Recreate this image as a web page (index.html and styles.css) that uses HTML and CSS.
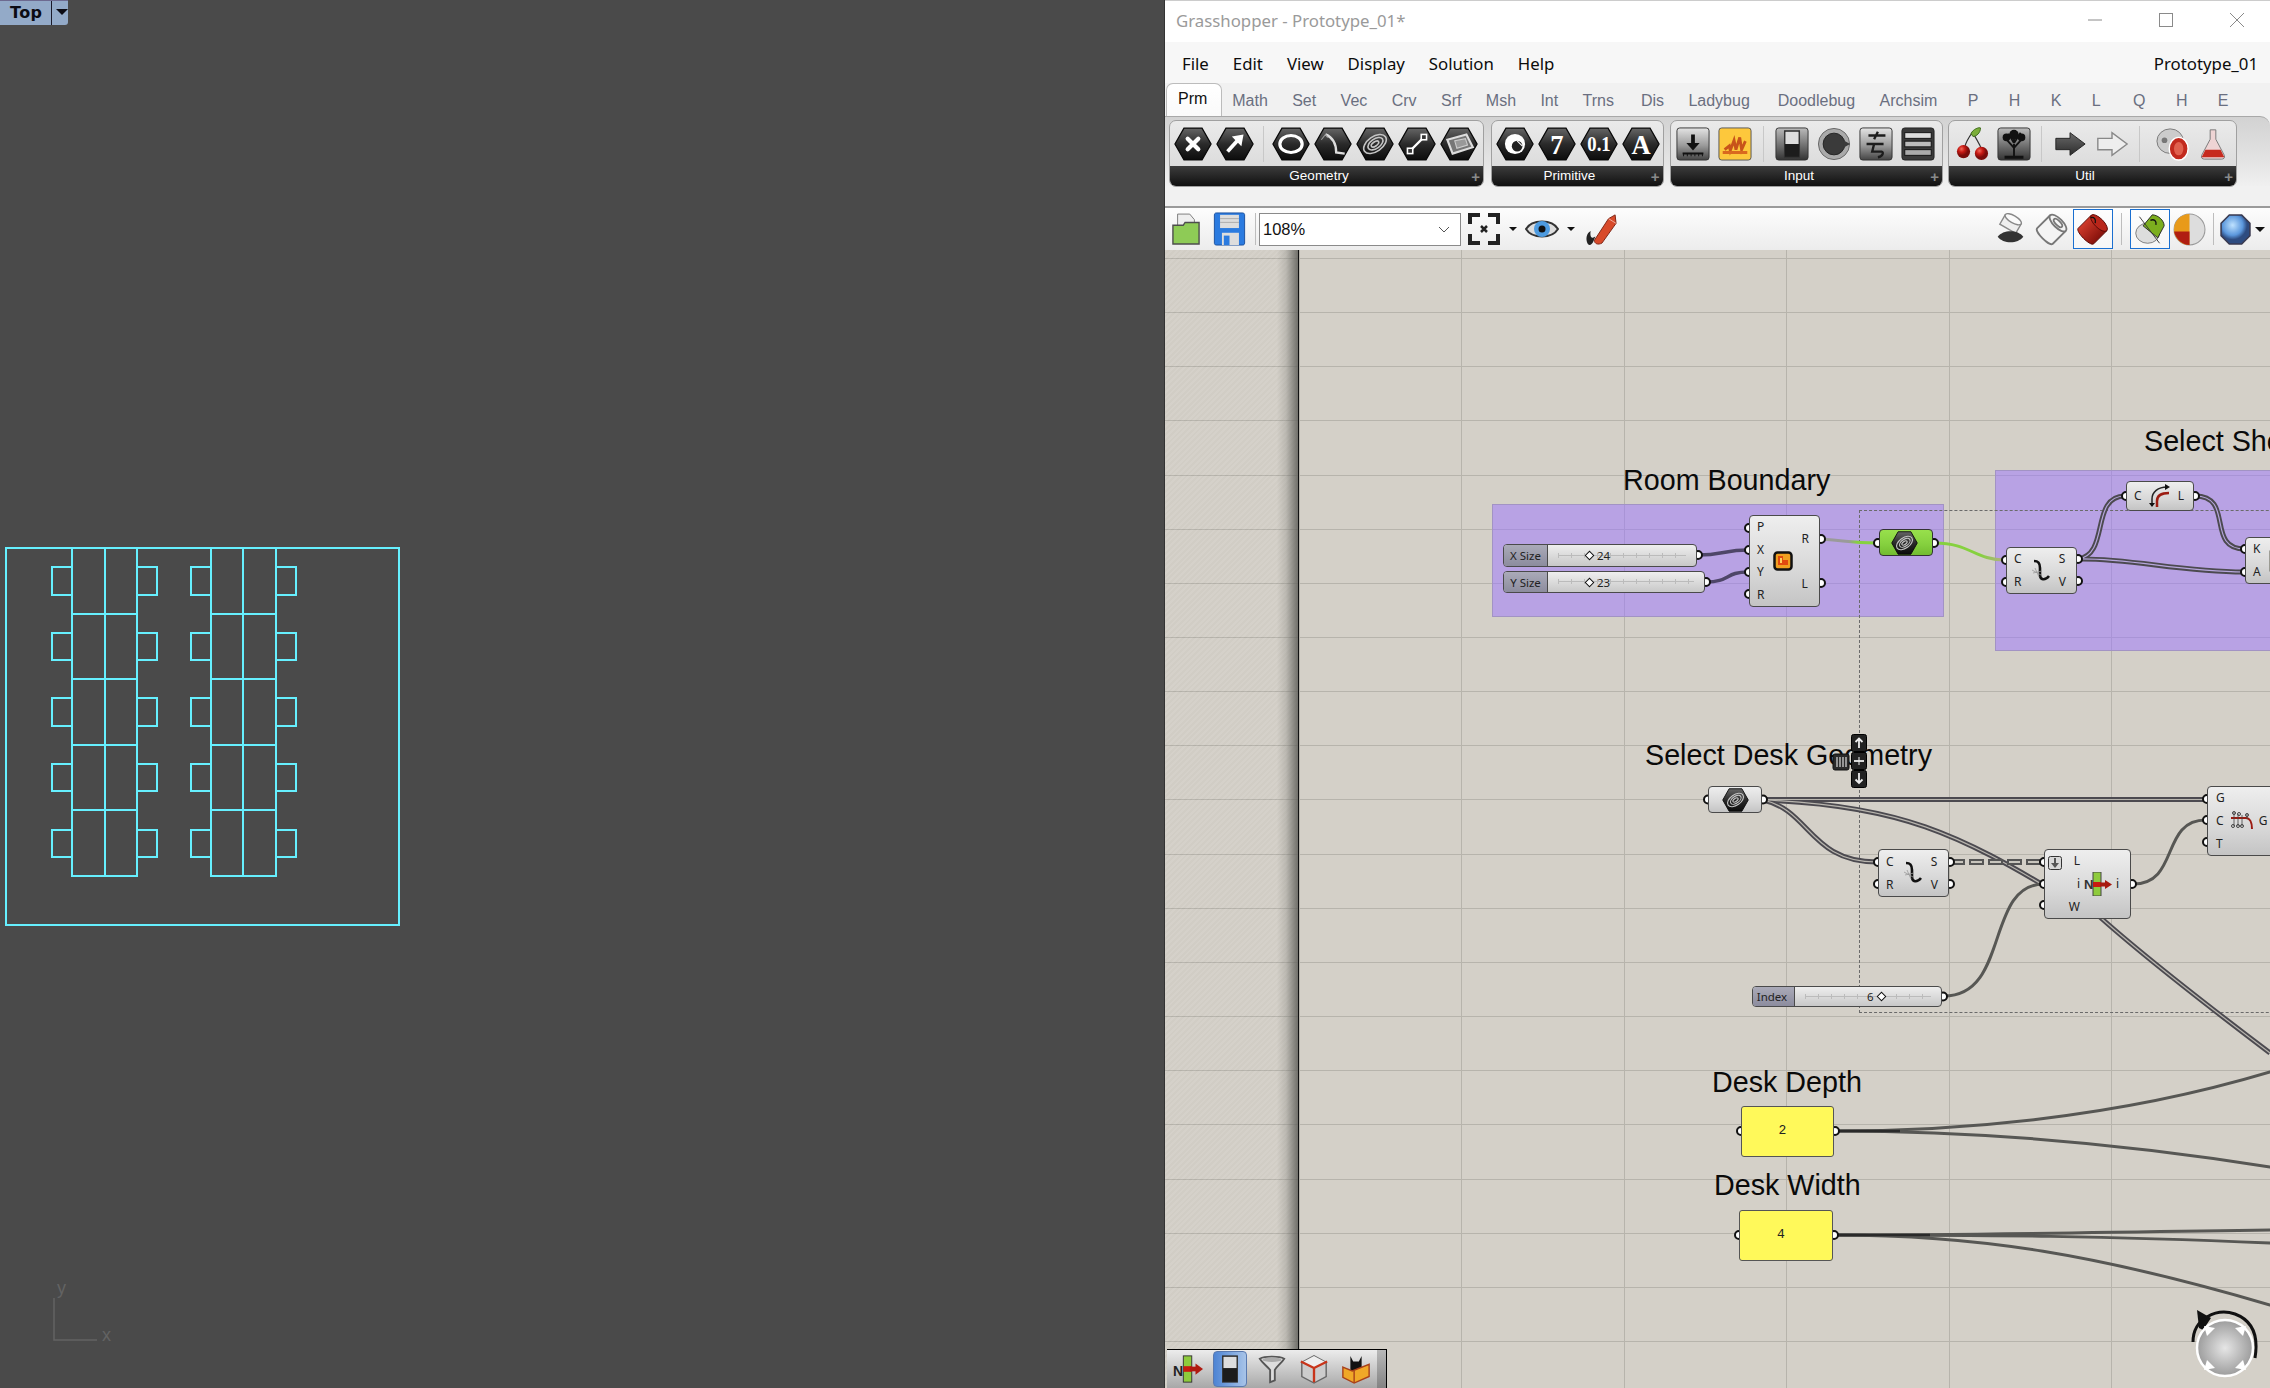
FILE: index.html
```html
<!DOCTYPE html>
<html lang="en">
<head>
<meta charset="utf-8">
<title>Grasshopper - Prototype_01*</title>
<link rel="stylesheet" href="styles.css">
</head>
<body>
<svg class="defs" width="0" height="0" aria-hidden="true">
  <defs>
    <linearGradient id="hexfill" x1="0" y1="0" x2="0" y2="1"><stop offset="0" stop-color="#666"/><stop offset=".5" stop-color="#2a2a2a"/><stop offset="1" stop-color="#0c0c0c"/></linearGradient>
    <linearGradient id="btnfill" x1="0" y1="0" x2="0" y2="1"><stop offset="0" stop-color="#e4e4e4"/><stop offset=".55" stop-color="#9a9a9a"/><stop offset="1" stop-color="#444"/></linearGradient>
    <linearGradient id="darkbtn" x1="0" y1="0" x2="0" y2="1"><stop offset="0" stop-color="#bbb"/><stop offset="1" stop-color="#333"/></linearGradient>
    <linearGradient id="arrowfill" x1="0" y1="0" x2="0" y2="1"><stop offset="0" stop-color="#6a6a6a"/><stop offset="1" stop-color="#2c2c2c"/></linearGradient>
    <linearGradient id="redcyl" x1="0" y1="0" x2="1" y2="0"><stop offset="0" stop-color="#d03a2a"/><stop offset="1" stop-color="#86120c"/></linearGradient>
    <linearGradient id="toGreen" gradientUnits="userSpaceOnUse" x1="1821" y1="0" x2="1876" y2="0"><stop offset="0" stop-color="#9a9a9a"/><stop offset=".5" stop-color="#9a9a9a"/><stop offset=".65" stop-color="#86d13f"/></linearGradient>
    <linearGradient id="fromGreen" gradientUnits="userSpaceOnUse" x1="1935" y1="0" x2="2005" y2="0"><stop offset="0" stop-color="#86d13f"/><stop offset=".65" stop-color="#86d13f"/><stop offset="1" stop-color="#b5ab8c"/></linearGradient>
    <radialGradient id="dialfill"><stop offset="0" stop-color="#e6e6e6"/><stop offset="1" stop-color="#9c9c9c"/></radialGradient>
    <radialGradient id="cherry" cx=".35" cy=".3"><stop offset="0" stop-color="#f06a5a"/><stop offset=".5" stop-color="#c81a14"/><stop offset="1" stop-color="#7a0c0a"/></radialGradient>
    <radialGradient id="orb" cx=".4" cy=".35"><stop offset="0" stop-color="#bfe2ff"/><stop offset=".7" stop-color="#5b97dc"/><stop offset="1" stop-color="#2e4c80"/></radialGradient>
    <symbol id="hex" viewBox="0 0 36 32"><polygon points="1,16 9.500,1 26.500,1 35,16 26.500,31 9.500,31" fill="url(#hexfill)" stroke="#0a0a0a" stroke-width="1.200"/></symbol>
    <symbol id="spiral" viewBox="0 0 36 32"><use href="#hex" width="36" height="32"/><g fill="none" stroke="#c4c4c4" stroke-width="1.500" transform="rotate(-35 18 16)"><ellipse cx="18" cy="16" rx="12" ry="7"/><ellipse cx="18.500" cy="16" rx="8" ry="4.500"/><ellipse cx="18" cy="16" rx="4" ry="2"/></g></symbol>
    <symbol id="swirl" viewBox="0 0 24 24"><path d="M6 2C11 2 12 5 12 9L12 16C12 21 17 22 21 17" fill="none" stroke="#111" stroke-width="2.600"/><path d="M5 14L14 12M7 9L11 18M4 11L13 16" stroke="#999" stroke-width=".8"/></symbol>
  </defs>
</svg>

<main class="desktop">
  <section class="viewport">
    <div class="view-tab"><span class="view-name">Top</span><span class="view-drop"></span></div>
    <svg class="plan" viewBox="0 0 1164 1388">
      <g class="plan-lines">
        <rect x="6" y="548" width="393" height="377"/>
        <path d="M72 548V876H137V548M105 548V876M72 614H137M72 679H137M72 745H137M72 810H137"/>
        <path d="M211 548V876H276V548M243 548V876M211 614H276M211 679H276M211 745H276M211 810H276"/>
        <path d="M72 567H52V595H72M72 633H52V660H72M72 698H52V726H72M72 764H52V791H72M72 830H52V857H72"/>
        <path d="M137 567H157V595H137M137 633H157V660H137M137 698H157V726H137M137 764H157V791H137M137 830H157V857H137"/>
        <path d="M211 567H191V595H211M211 633H191V660H211M211 698H191V726H211M211 764H191V791H211M211 830H191V857H211"/>
        <path d="M276 567H296V595H276M276 633H296V660H276M276 698H296V726H276M276 764H296V791H276M276 830H296V857H276"/>
      </g>
      <path class="plan-axis" d="M54 1298V1340H97"/>
      <text class="plan-axis-label" x="57" y="1294">y</text>
      <text class="plan-axis-label" x="102" y="1341">x</text>
    </svg>
  </section>

  <section class="gh">
    <header class="titlebar">
      <span class="title-text">Grasshopper - Prototype_01*</span>
      <div class="win-controls">
        <svg class="win-icon" viewBox="0 0 16 16"><path d="M1 8H15"/></svg>
        <svg class="win-icon" viewBox="0 0 16 16"><rect x="1.500" y="1.500" width="13" height="13"/></svg>
        <svg class="win-icon" viewBox="0 0 16 16"><path d="M1 1L15 15M15 1L1 15"/></svg>
      </div>
    </header>

    <nav class="menubar">
      <span>File</span><span>Edit</span><span>View</span><span>Display</span><span>Solution</span><span>Help</span>
      <span class="doc-name">Prototype_01</span>
    </nav>

    <nav class="tabs">
      <span class="tab tab-active">Prm</span><span class="tab">Math</span><span class="tab">Set</span><span class="tab">Vec</span><span class="tab">Crv</span><span class="tab">Srf</span><span class="tab">Msh</span><span class="tab">Int</span><span class="tab">Trns</span><span class="tab tab-dis">Dis</span><span class="tab">Ladybug</span><span class="tab tab-doodle">Doodlebug</span><span class="tab">Archsim</span><span class="tab tab-short">P</span><span class="tab tab-short">H</span><span class="tab tab-short">K</span><span class="tab tab-short">L</span><span class="tab tab-short tab-q">Q</span><span class="tab tab-short">H</span><span class="tab tab-short">E</span>
    </nav>

    <div class="ribbon">
      <div class="panel panel-geometry">
        <div class="panel-icons">
          <svg class="rib" viewBox="0 0 36 32"><use href="#hex" width="36" height="32"/><path d="M13 11L23 21M23 11L13 21" stroke="#fff" stroke-width="4" stroke-linecap="round"/></svg>
          <svg class="rib" viewBox="0 0 36 32"><use href="#hex" width="36" height="32"/><path d="M11 23L21 12" stroke="#fff" stroke-width="3.500"/><polygon points="26,7 15,9 24,18" fill="#fff"/></svg>
          <i class="rib-sep"></i>
          <svg class="rib" viewBox="0 0 36 32"><use href="#hex" width="36" height="32"/><ellipse cx="18" cy="16" rx="10.500" ry="8" fill="none" stroke="#fff" stroke-width="3"/></svg>
          <svg class="rib" viewBox="0 0 36 32"><use href="#hex" width="36" height="32"/><path d="M11 7C18 10 21 16 21 24L29 25" fill="none" stroke="#ddd" stroke-width="2.200"/><path d="M7 12L11 7L13 10" fill="none" stroke="#999" stroke-width="1"/></svg>
          <svg class="rib" viewBox="0 0 36 32"><use href="#spiral" width="36" height="32"/></svg>
          <svg class="rib" viewBox="0 0 36 32"><use href="#hex" width="36" height="32"/><path d="M12 22L24 10" stroke="#fff" stroke-width="2"/><rect x="9" y="20" width="5" height="5" fill="#333" stroke="#fff" stroke-width="1.500"/><rect x="22" y="7" width="5" height="5" fill="#333" stroke="#fff" stroke-width="1.500"/></svg>
          <svg class="rib" viewBox="0 0 36 32"><use href="#hex" width="36" height="32"/><polygon points="7,12 25,7 31,19 12,25" fill="#777" stroke="#ddd" stroke-width="2"/><path d="M14 13L24 11L26 17L16 20Z" fill="#999" stroke="#ccc"/></svg>
        </div>
        <div class="panel-label">Geometry</div>
      </div>
      <div class="panel panel-primitive">
        <div class="panel-icons">
          <svg class="rib" viewBox="0 0 36 32"><use href="#hex" width="36" height="32"/><circle cx="18" cy="16" r="9.500" fill="#fff"/><circle cx="20" cy="18" r="5" fill="#222"/><path d="M20 13L25 18" stroke="#fff" stroke-width="1"/></svg>
          <svg class="rib" viewBox="0 0 36 32"><use href="#hex" width="36" height="32"/><text class="rib-num" x="18" y="25" font-size="25">7</text></svg>
          <svg class="rib" viewBox="0 0 36 32"><use href="#hex" width="36" height="32"/><text class="rib-num" x="18" y="23" font-size="20" textLength="22" lengthAdjust="spacingAndGlyphs">0.1</text></svg>
          <svg class="rib" viewBox="0 0 36 32"><use href="#hex" width="36" height="32"/><text class="rib-num" x="18" y="25" font-size="25">A</text></svg>
        </div>
        <div class="panel-label">Primitive</div>
      </div>
      <div class="panel panel-input">
        <div class="panel-icons">
          <svg class="rib" viewBox="0 0 36 36"><rect x="1" y="1" width="34" height="34" rx="3" fill="url(#btnfill)" stroke="#333"/><path d="M18 8V20" stroke="#111" stroke-width="4"/><polygon points="11,17 25,17 18,25" fill="#111"/><path d="M7 28H29" stroke="#111" stroke-width="2"/><path d="M8 28V31M12 28V31M16 28V31M20 28V31M24 28V31M28 28V31" stroke="#111"/></svg>
          <svg class="rib" viewBox="0 0 36 36"><rect x="1" y="1" width="34" height="34" rx="3" fill="#fdc83c" stroke="#555"/><path d="M7 24L12 20L13 25L17 14L19 24L23 11L25 24L29 15" fill="none" stroke="#c8541a" stroke-width="3"/><path d="M5 27H31" stroke="#d9691e" stroke-width="3"/></svg>
          <i class="rib-sep"></i>
          <svg class="rib" viewBox="0 0 36 36"><rect x="1" y="1" width="34" height="34" rx="3" fill="url(#darkbtn)" stroke="#333"/><rect x="10" y="4" width="16" height="28" fill="#1c1c1c" stroke="#333"/><rect x="11" y="5" width="14" height="13" fill="#ddd"/></svg>
          <svg class="rib" viewBox="0 0 36 36"><circle cx="18" cy="18" r="16.500" fill="#aaa" stroke="#666"/><circle cx="18" cy="18" r="11.500" fill="#3a3a3a" stroke="#222"/><polygon points="28,14 35,18 28,22" fill="#3a3a3a"/></svg>
          <svg class="rib" viewBox="0 0 36 36"><rect x="1" y="1" width="34" height="34" rx="3" fill="url(#btnfill)" stroke="#333"/><path d="M10 9H28M20 5L16 13M8 18H26M16 18L14 26H24C26 26 26 31 20 32" fill="none" stroke="#1c1c1c" stroke-width="2.500"/></svg>
          <svg class="rib" viewBox="0 0 36 36"><rect x="1" y="1" width="34" height="34" rx="3" fill="#3a3a3a" stroke="#222"/><rect x="4" y="6" width="28" height="6" fill="#ddd" stroke="#111"/><rect x="4" y="15" width="28" height="6" fill="#bbb" stroke="#111"/><rect x="4" y="24" width="28" height="6" fill="#aaa" stroke="#111"/></svg>
        </div>
        <div class="panel-label">Input</div>
      </div>
      <div class="panel panel-util">
        <div class="panel-icons">
          <svg class="rib" viewBox="0 0 36 36"><path d="M10 22C12 14 16 9 19 5C21 12 26 16 28 24" fill="none" stroke="#333" stroke-width="1.200"/><path d="M17 7C19 2 26 0 27 1C27 6 23 10 19 10Z" fill="#7cae3a" stroke="#3d6a1a"/><circle cx="9" cy="26" r="7" fill="url(#cherry)"/><circle cx="28" cy="28" r="7" fill="url(#cherry)"/></svg>
          <svg class="rib" viewBox="0 0 36 36"><rect x="1" y="1" width="34" height="34" rx="3" fill="url(#darkbtn)" stroke="#333"/><path d="M18 32L18 18M18 22L9 12M18 22L27 12M18 17L12 7M18 17L25 6M18 17V6" stroke="#111" stroke-width="2"/><circle cx="10" cy="11" r="4" fill="#111"/><circle cx="18" cy="8" r="5" fill="#111"/><circle cx="26" cy="11" r="4" fill="#111"/><path d="M8 32H28" stroke="#111" stroke-width="3"/></svg>
          <i class="rib-sep"></i>
          <svg class="rib" viewBox="0 0 36 36"><polygon points="3,12 18,12 18,6 34,18 18,30 18,24 3,24" fill="url(#arrowfill)" stroke="#222"/></svg>
          <svg class="rib" viewBox="0 0 36 36"><polygon points="3,12 18,12 18,6 34,18 18,30 18,24 3,24" fill="#eee" stroke="#888" stroke-width="1.500"/></svg>
          <i class="rib-sep"></i>
          <svg class="rib rib-gem" viewBox="0 0 36 36"><ellipse cx="15" cy="15" rx="14" ry="13" fill="#ccc" stroke="#777"/><circle cx="9" cy="14" r="3" fill="#777"/><ellipse cx="24" cy="23" rx="10" ry="12" fill="#c22a1e" stroke="#fff" stroke-width="1.500"/><ellipse cx="24" cy="23" rx="5" ry="7" fill="#e0604e"/></svg>
          <svg class="rib rib-flask" viewBox="0 0 36 36"><path d="M15 3H21V13L30 30C31 33 29 34 27 34H9C7 34 5 33 6 30L15 13Z" fill="#eed4d4" stroke="#777"/><path d="M10 24H26L30 32H6Z" fill="#c62a1e"/></svg>
        </div>
        <div class="panel-label">Util</div>
      </div>
    </div>

    <div class="toolbar">
      <svg class="tb tb-folder" viewBox="0 0 30 36"><path d="M6 2H19L24 8V16H6Z" fill="#eee" stroke="#777"/><path d="M1 14H12L14 11H29V34H1Z" fill="#8ecb56" stroke="#4d4d4d" stroke-width="1.500"/></svg>
      <svg class="tb tb-save" viewBox="0 0 34 36"><path d="M3 1H31C33 1 33 3 33 3V33C33 35 31 35 31 35H3C1 35 1 33 1 33V3C1 1 3 1 3 1Z" fill="#2b7be0" stroke="#1a4f9c"/><rect x="7" y="3" width="20" height="14" fill="#ddd"/><path d="M7 7H27M7 11H27" stroke="#aaa"/><rect x="9" y="22" width="18" height="13" fill="#ddd"/><rect x="11" y="25" width="6" height="10" fill="#2b7be0"/></svg>
      <i class="tb-sep"></i>
      <div class="combo"><span>108%</span><svg class="combo-chev" viewBox="0 0 12 7"><path d="M1 1L6 6L11 1"/></svg></div>
      <svg class="tb tb-extents" viewBox="0 0 34 36"><path d="M13 4H3V13M21 4H31V13M13 32H3V23M21 32H31V23" fill="none" stroke="#222" stroke-width="4"/><path d="M14 15L20 21M20 15L14 21" stroke="#222" stroke-width="2.500"/></svg>
      <i class="tb-caret"></i>
      <svg class="tb tb-eye" viewBox="0 0 34 24"><path d="M1 12C7 2 27 2 33 12C27 22 7 22 1 12Z" fill="#ddd" stroke="#333" stroke-width="2"/><circle cx="17" cy="12" r="8" fill="#4d9be0"/><circle cx="17" cy="12" r="3.500" fill="#111"/></svg>
      <i class="tb-caret"></i>
      <svg class="tb tb-pencil" viewBox="0 0 34 36"><path d="M3 34C0 28 2 22 6 20C5 26 7 29 11 26L9 31C7 35 5 36 3 34Z" fill="#222"/><path d="M10 30L25 7L32 3L33 12L18 33C14 35 10 34 10 30Z" fill="#d84a2a" stroke="#7a2010"/><path d="M25 7L33 12" stroke="#f0b0a0"/></svg>
      <div class="tb-right">
        <svg class="tb tb-small" viewBox="0 0 32 36"><g transform="rotate(30 16 12)"><path d="M6 6V18H26V6" fill="#eee" stroke="#888" stroke-width="1.500"/><ellipse cx="16" cy="6" rx="10" ry="4" fill="#fafafa" stroke="#888" stroke-width="1.500"/></g><path d="M2 26C8 18 24 18 30 26C24 34 8 34 2 26Z" fill="#333"/></svg>
        <svg class="tb tb-small t-wire" viewBox="0 0 34 36"><g transform="rotate(45 17 18)" fill="#f4f4f4" stroke="#777" stroke-width="2"><path d="M5 8V28C5 33 29 33 29 28V8"/><ellipse cx="17" cy="8" rx="12" ry="5"/><ellipse cx="17" cy="8" rx="6" ry="2.500"/></g></svg>
        <div class="tb-active ta-first"><svg class="tb tb-small" viewBox="0 0 34 36"><g transform="rotate(45 17 18)"><path d="M5 8V28C5 33 29 33 29 28V8Z" fill="url(#redcyl)" stroke="#5a0a06"/><ellipse cx="17" cy="8" rx="12" ry="5" fill="#b8261a" stroke="#5a0a06"/></g><path d="M15 5C19 4 21 7 20 11" fill="none" stroke="#111" stroke-width="1.500"/></svg></div>
        <i class="tb-sep tb-sep-wide"></i>
        <div class="tb-active"><svg class="tb tb-small" viewBox="0 0 34 36"><ellipse cx="15" cy="22" rx="13" ry="11" fill="#ddd" stroke="#777"/><path d="M10 14L20 2C26 2 33 8 33 14L26 27Z" fill="#7cae1e" stroke="#222"/><path d="M6 4L28 33" stroke="#333"/><path d="M18 8C22 6 25 9 24 13" fill="none" stroke="#111" stroke-width="1.500"/></svg></div>
        <svg class="tb tb-small t-ball" viewBox="0 0 32 32"><circle cx="16" cy="16" r="15" fill="#ddd" stroke="#999"/><path d="M16 1A15 15 0 0 0 16 31Z" fill="#e89a1a"/><path d="M1 18H16V31C9 31 3 26 1 18Z" fill="#b01e12"/></svg>
        <i class="tb-sep tb-sep-orb"></i>
        <svg class="tb tb-small t-orb" viewBox="0 0 32 32"><polygon points="10,2 22,2 30,10 30,22 22,30 10,30 2,22 2,10" fill="url(#orb)" stroke="#3a3a50" stroke-width="1.500"/></svg>
        <i class="tb-caret tb-caret-end"></i>
      </div>
    </div>

    <div class="canvas">
      <div class="gutter"></div>
      <div class="group group-room"></div>
      <div class="group group-shape"></div>
      <div class="selection"></div>
      <div class="heading h-room">Room Boundary</div>
      <div class="heading h-shape">Select Sheet</div>
      <div class="heading h-desk">Select Desk Geometry</div>
      <div class="heading h-depth">Desk Depth</div>
      <div class="heading h-width">Desk Width</div>

      <svg class="wires" viewBox="1165 250 1105 1138">
        <defs>
          <path id="d1" d="M2078 559C2110 555 2090 496 2125 496"/>
          <path id="d2" d="M2078 559C2130 558 2180 572 2244 572"/>
          <path id="d3" d="M2195 496C2235 496 2205 549 2245 549"/>
          <path id="d4" d="M1763 799.500H2206"/>
          <path id="d5" d="M1763 800C1810 810 1810 862 1877 862"/>
          <path id="d6" d="M1763 800C1900 805 1960 835 2060 895"/>
          <path id="d7" d="M2090 908C2130 945 2200 1000 2270 1053"/>
        </defs>
        <g class="w-outer"><use href="#d1"/><use href="#d2"/><use href="#d3"/><use href="#d4"/><use href="#d5"/><use href="#d6"/><use href="#d7"/></g>
        <g class="w-inner w-inner-purple"><use href="#d1"/><use href="#d2"/><use href="#d3"/></g>
        <g class="w-inner"><use href="#d4"/><use href="#d5"/><use href="#d6"/><use href="#d7"/></g>
        <path class="w-dash" d="M1950 862H2044"/>
        <path class="w-dash-in" d="M1950 862H2044"/>
        <path class="w-purple" d="M1698 555C1722 555 1725 550 1748 550"/>
        <path class="w-purple" d="M1706 582C1730 582 1725 572 1748 572"/>
        <path class="w-color w-a" d="M1821 539C1850 541 1850 543 1876 543"/>
        <path class="w-color w-b" d="M1935 543C1970 543 1975 560 2005 560"/>
        <g class="w-single">
          <path d="M1944 996C2010 996 1985 884 2044 884"/>
          <path d="M2133 884C2180 884 2160 820 2206 820"/>
          <path d="M1836 1131C1950 1131 2110 1120 2270 1072"/>
          <path d="M1836 1131C1950 1131 2100 1140 2270 1167"/>
          <path d="M1835 1235C2000 1235 2100 1232 2270 1230"/>
          <path d="M1835 1235C2000 1235 2100 1236 2270 1243"/>
          <path d="M1835 1235C1980 1235 2100 1255 2270 1305"/>
        </g>
        <path class="w-merge" d="M1836 1131H1900M1835 1235H1930"/>
        <g class="ports">
          <circle cx="1698" cy="555" r="4"/><circle cx="1706" cy="582" r="4"/>
          <circle cx="1749" cy="528" r="4"/><circle cx="1749" cy="550" r="4"/><circle cx="1749" cy="572" r="4"/><circle cx="1749" cy="594" r="4"/>
          <circle cx="1821" cy="539" r="4"/><circle cx="1821" cy="583" r="4"/>
          <circle cx="1878" cy="543" r="4"/><circle cx="1934" cy="543" r="4"/>
          <circle cx="2006" cy="560" r="4"/><circle cx="2006" cy="582" r="4"/><circle cx="2078" cy="559" r="4"/><circle cx="2078" cy="581" r="4"/>
          <circle cx="2126" cy="496" r="4"/><circle cx="2195" cy="496" r="4"/>
          <circle cx="2245" cy="549" r="4"/><circle cx="2245" cy="572" r="4"/>
          <circle cx="1708" cy="799.500" r="4"/><circle cx="1763" cy="799.500" r="4"/>
          <circle cx="1878" cy="862" r="4"/><circle cx="1878" cy="884" r="4"/><circle cx="1950" cy="862" r="4"/><circle cx="1950" cy="884" r="4"/>
          <circle cx="2044" cy="862" r="4"/><circle cx="2044" cy="884" r="4"/><circle cx="2044" cy="905" r="4"/><circle cx="2132" cy="884" r="4"/>
          <circle cx="2207" cy="799" r="4"/><circle cx="2207" cy="820" r="4"/><circle cx="2207" cy="842" r="4"/>
          <circle cx="1943" cy="996.500" r="4"/>
          <circle cx="1741" cy="1131" r="4"/><circle cx="1835" cy="1131" r="4"/>
          <circle cx="1739" cy="1235" r="4"/><circle cx="1834" cy="1235" r="4"/>
        </g>
      </svg>

      <div class="slider s-x"><span class="slider-name">X Size</span><div class="slider-track t-grip"><i class="diamond"></i><span>24</span></div></div>
      <div class="slider s-y"><span class="slider-name">Y Size</span><div class="slider-track t-grip"><i class="diamond"></i><span>23</span></div></div>
      <div class="slider s-index"><span class="slider-name">Index</span><div class="slider-track t-index"><span>6</span><i class="diamond"></i></div></div>

      <div class="node n-rect">
        <div class="pins"><span>P</span><span>X</span><span>Y</span><span>R</span></div>
        <svg class="n-icon-rect" viewBox="0 0 20 20"><rect x="1.500" y="1.500" width="17" height="17" rx="3" fill="#f0a020" stroke="#111" stroke-width="2.500"/><path d="M5 5V14H15V9H10V5Z" fill="#e04a10"/><rect x="7" y="7" width="2" height="5" fill="#ffd060"/></svg>
        <div class="pins"><span>R</span><span>L</span></div>
      </div>
      <div class="node param p-green"><svg class="p-icon" viewBox="0 0 36 32"><use href="#spiral" width="36" height="32"/></svg></div>
      <div class="node param p-grey"><svg class="p-icon" viewBox="0 0 36 32"><use href="#spiral" width="36" height="32"/></svg></div>
      <div class="node n-div1">
        <div class="pins"><span>C</span><span>R</span></div>
        <svg class="n-icon" viewBox="0 0 24 24"><use href="#swirl" width="24" height="24"/></svg>
        <div class="pins"><span>S</span><span>V</span></div>
      </div>
      <div class="node n-cl">
        <div class="pins"><span>C</span></div>
        <svg class="n-icon" viewBox="0 0 24 24"><path d="M4 22V15C4 8 10 3 19 3" fill="none" stroke="#222" stroke-width="1.500"/><path d="M9 23V17C9 12 13 9 21 9" fill="none" stroke="#9c1c12" stroke-width="2.500"/><polygon points="1,19 7,19 4,23" fill="#111"/><polygon points="17,0 22,3 17,6" fill="#111"/></svg>
        <div class="pins"><span>L</span></div>
      </div>
      <div class="node n-ka">
        <div class="pins"><span>K</span><span>A</span></div>
        <svg class="n-icon n-icon-ka" viewBox="0 0 24 24"><rect x="1" y="1" width="22" height="22" fill="#f6f020" stroke="#666"/><rect x="4" y="4" width="16" height="16" fill="#9ccc3c"/></svg>
      </div>
      <div class="node n-div2">
        <div class="pins"><span>C</span><span>R</span></div>
        <svg class="n-icon" viewBox="0 0 24 24"><use href="#swirl" width="24" height="24"/></svg>
        <div class="pins"><span>S</span><span>V</span></div>
      </div>
      <div class="node n-list">
        <div class="pins pins-right"><span>L</span><span>i</span><span>W</span></div>
        <svg class="n-icon n-icon-list" viewBox="0 0 28 24"><rect x="9" y="0" width="8" height="24" fill="#8ecb3c" stroke="#444"/><rect x="9" y="10" width="8" height="5" fill="#c81a10"/><path d="M16 12.500H22" stroke="#a81a10" stroke-width="4"/><polygon points="21,8 28,12.500 21,17" fill="#a81a10"/><text class="n-letter" x="0" y="17">N</text></svg>
        <div class="pins"><span>i</span></div>
        <svg class="flag-down" viewBox="0 0 14 14"><rect x=".5" y=".5" width="13" height="13" rx="2" fill="#d8d8d8" stroke="#333"/><path d="M7 2V9" stroke="#555" stroke-width="2"/><polygon points="3,7 11,7 7,12" fill="#555"/></svg>
      </div>
      <div class="node n-gct">
        <div class="pins"><span>G</span><span>C</span><span>T</span></div>
        <svg class="n-icon n-icon-gct" viewBox="0 0 24 20"><path d="M1 7H16C20 7 22 12 22 18" fill="none" stroke="#9c1c12" stroke-width="2"/><path d="M4 1V15M8 3V15M12 4V15M17 3V8" stroke="#444" stroke-width=".8"/><circle cx="4" cy="2" r="1.500" fill="none" stroke="#444"/><circle cx="9" cy="3" r="1.500" fill="none" stroke="#444"/><circle cx="17" cy="4" r="1.500" fill="none" stroke="#444"/><circle cx="3" cy="15" r="1.500" fill="none" stroke="#444"/><circle cx="8" cy="15" r="1.500" fill="none" stroke="#444"/><circle cx="12" cy="15" r="1.500" fill="none" stroke="#444"/></svg>
        <div class="pins"><span>G</span></div>
      </div>
      <div class="yellow y-depth"><span>2</span></div>
      <div class="yellow y-width"><span>4</span></div>

      <svg class="mover" viewBox="0 0 36 54">
        <g fill="#222" stroke="#000" stroke-width="1"><rect x="20.500" y="0.500" width="15" height="17" rx="2"/><rect x="20.500" y="18.500" width="15" height="17" rx="2"/><rect x="20.500" y="36.500" width="15" height="17" rx="2"/></g>
        <g fill="none" stroke="#eee" stroke-width="1.800"><path d="M28 14V5M24.500 8L28 4.500L31.500 8"/><path d="M23 27H33"/><path d="M28 23V31" stroke-width="1"/><path d="M28 39V49M24.500 45.500L28 49L31.500 45.500"/></g>
        <rect x="2" y="20" width="16" height="16" rx="2" fill="#2a2a2a" stroke="#111"/>
        <path d="M6 23V33M9 23V33M12 23V33M15 23V33" stroke="#ddd" stroke-width="1.200"/>
      </svg>

      <svg class="dial" viewBox="0 0 72 76">
        <polygon points="8,6 22,14 14,26 10,24" fill="#111"/>
        <path d="M4 38C4 14 28 4 46 10C62 16 70 30 66 54" fill="none" stroke="#111" stroke-width="3"/>
        <circle cx="36" cy="44" r="28" fill="url(#dialfill)" stroke="#fff" stroke-width="2.500"/>
        <path d="M15 22L26 24L18 32Z M57 22L46 24L54 32Z M15 66L26 64L18 56Z M57 66L46 64L54 56Z" fill="#fff"/>
      </svg>

      <div class="bottom-tools">
        <svg class="bt" viewBox="0 0 32 32"><text class="n-letter-big" x="0" y="23">N</text><rect x="11" y="2" width="9" height="28" fill="#8ecb3c" stroke="#333"/><rect x="11" y="13" width="9" height="6" fill="#c81a10"/><path d="M18 16H25" stroke="#b01a10" stroke-width="5"/><polygon points="24,10 32,16 24,22" fill="#b01a10"/></svg>
        <div class="bt-active"><svg class="bt" viewBox="0 0 32 32"><rect x="8" y="2" width="16" height="28" fill="#1c1c1c" stroke="#333"/><rect x="9" y="3" width="14" height="12" fill="#ddd"/></svg></div>
        <svg class="bt" viewBox="0 0 32 32"><path d="M3 5C8 2 24 2 29 5C26 10 21 13 19 17V28L14 30V17C11 13 6 10 3 5Z" fill="#ddd" stroke="#555" stroke-width="2"/><ellipse cx="16" cy="6" rx="10" ry="2.500" fill="#aaa"/></svg>
        <svg class="bt" viewBox="0 0 32 32"><path d="M3 9L16 2L29 9V24L16 31L3 24Z" fill="#ccc" stroke="#666" stroke-width="1.500"/><path d="M3 9L16 2L29 9L16 15Z" fill="#eee"/><path d="M2 8L16 15L30 8M16 15V30" fill="none" stroke="#c8341a" stroke-width="2.500"/></svg>
        <svg class="bt" viewBox="0 0 32 32"><path d="M10 2L13 8H19L22 2V18H10Z" fill="#111"/><path d="M2 14L12 18L30 11V24L14 31L2 25Z" fill="#f0a828" stroke="#a8401a" stroke-width="1.500"/><path d="M14 18V31" stroke="#a8401a" stroke-width="1.500"/></svg>
      </div>
    </div>
  </section>
</main>
</body>
</html>
```
FILE: styles.css
```css
* { box-sizing: border-box; }
html, body { margin: 0; padding: 0; height: 100%; overflow: hidden; background: #4a4a4a; }
body { font-family: "Noto Sans", "Open Sans", sans-serif; color: #111; }
.defs { position: absolute; }
.desktop { display: flex; width: 2270px; height: 1388px; }

/* Rhino viewport */
.viewport { position: relative; width: 1165px; flex: none; background: #4a4a4a; border-right: 1px solid #333; }
.view-tab { position: absolute; left: 0; top: 0; width: 68px; height: 25px; display: flex; background: #93aac8; border-top: 1px solid #6d6a90; border-bottom-right-radius: 3px; }
.view-name { width: 53px; padding-left: 10px; border-right: 1px solid #1a1a2a; font: bold 16px/24px "DejaVu Sans", sans-serif; letter-spacing: .4px; color: #0c0c14; }
.view-drop { width: 0; height: 0; margin: 8px 0 0 4px; border-left: 6px solid transparent; border-right: 6px solid transparent; border-top: 6px solid #0c0c14; }
.plan { display: block; width: 1164px; height: 1388px; }
.plan-lines rect, .plan-lines path { fill: none; stroke: #66f0ff; stroke-width: 2; }
.plan-axis { fill: none; stroke: #636363; stroke-width: 1.500; }
.plan-axis-label { font: 18px "Liberation Sans", sans-serif; fill: #636363; }

/* Grasshopper window */
.gh { flex: 1; min-width: 0; display: flex; flex-direction: column; background: #f1f1f1; }
.titlebar { height: 42px; flex: none; display: flex; align-items: center; padding: 0 0 2px 11px; background: #fff; border-top: 1px solid #ccc; }
.title-text { font-size: 16.800px; color: #9a9a9a; }
.win-controls { margin-left: auto; display: flex; align-items: center; gap: 55px; padding-right: 25px; margin-top: -1px; }
.win-icon { width: 16px; height: 16px; fill: none; stroke: #8a8a8a; stroke-width: 1; }
.menubar { height: 41px; flex: none; display: flex; align-items: center; gap: 24px; padding: 2px 12px 0 17px; font-size: 16.800px; background: #f7f7f7; color: #0c0c0c; }
.doc-name { margin-left: auto; }

.tabs { height: 33px; flex: none; display: flex; align-items: flex-end; gap: 24.400px; padding-left: 1px; font: 16px "Liberation Sans", sans-serif; color: #6a6f80; background: #f1f1f1; }
.tab { height: 30px; line-height: 30px; }
.tab-active { height: 33px; line-height: 29px; padding: 0 14px 0 11px; margin-right: -14.500px; background: linear-gradient(#fff, #fafafa); border: 1px solid #bcbcbc; border-bottom: none; border-radius: 7px 7px 0 0; color: #111; }
.tab-dis { margin-left: 2.500px; }
.tab-doodle { margin-left: 3.500px; }
.tab-short { margin-left: 6px; }
.tab-q { margin-left: 8px; }

.ribbon { height: 90px; flex: none; display: flex; gap: 6.500px; padding: 3px 0 0 4px; background: linear-gradient(#d2d2d2, #e6e6e6 55%, #f1f1f1 80%); border-top: 1px solid #a8a8a8; border-top-right-radius: 10px; box-shadow: inset 0 -20px 0 #f1f1f1; }
.panel { height: 67px; flex: none; display: flex; flex-direction: column; border: 1px solid #a0a0a0; border-radius: 7px; background: linear-gradient(#eaeaea, #d6d6d6); overflow: hidden; }
.panel-geometry { width: 315px; }
.panel-primitive { width: 173px; }
.panel-input { width: 273px; }
.panel-util { width: 289px; margin-left: -1.500px; }
.panel-icons { height: 45px; flex: none; display: flex; align-items: center; padding-left: 2px; }
.panel-input .panel-icons { padding-left: 1px; }
.panel-util .panel-icons { padding-left: 1.500px; }
.panel-label { flex: 1; position: relative; background: linear-gradient(#3c3c3c, #101010); color: #fff; font: 13.500px/20px "Liberation Sans", sans-serif; text-align: center; padding-right: 15px; }
.panel-label::after { content: "+"; position: absolute; right: 3px; top: 0; font: bold 15px/21px "Liberation Sans", sans-serif; color: #8a8a8a; }
.rib { width: 42px; height: 34px; flex: none; }
.rib-sep { width: 14px; height: 36px; flex: none; background: linear-gradient(#c8c8c8, #c8c8c8) center / 1px 100% no-repeat; }
.panel-input .rib-sep { width: 15px; }
.rib-gem { margin-left: 5px; }
.rib-flask { margin-left: -2px; }
.rib-num { font-family: "Liberation Serif", serif; font-weight: bold; fill: #fff; text-anchor: middle; }

.toolbar { height: 44px; flex: none; display: flex; align-items: center; padding-left: 7px; background: linear-gradient(#fdfdfd, #ececec); border-top: 2px solid #9a9a9a; }
.tb { flex: none; display: block; }
.tb-folder { width: 28px; height: 34px; }
.tb-save { width: 33px; height: 34px; margin-left: 13px; }
.tb-sep { width: 1px; height: 32px; background: #bdbdbd; margin: 0 3px 0 9px; flex: none; }
.combo { width: 202px; height: 33px; flex: none; display: flex; align-items: center; justify-content: space-between; padding: 0 10px 0 3px; background: #fff; border: 1px solid #8a8a8a; font: 16.500px "Liberation Sans", sans-serif; color: #111; }
.combo-chev { width: 12px; height: 7px; fill: none; stroke: #555; stroke-width: 1; }
.tb-extents { width: 34px; height: 36px; margin-left: 6px; }
.tb-caret { width: 0; height: 0; flex: none; margin: 0 8px 0 8px; border-left: 4px solid transparent; border-right: 4px solid transparent; border-top: 4px solid #111; }
.tb-eye { width: 34px; height: 24px; }
.tb-pencil { width: 32px; height: 34px; margin-left: 2px; }
.tb-right { margin-left: auto; display: flex; align-items: center; padding-right: 5px; }
.tb-small { width: 33px; height: 33px; }
.t-wire { margin-left: 8px; }
.tb-active { width: 40px; height: 40px; display: flex; align-items: center; justify-content: center; border: 1px solid #1a6fd0; background: rgba(255,255,255,.5); }
.ta-first { margin-left: 4.500px; }
.tb-sep-wide { margin: 0 8px; }
.t-ball { margin-left: 3.500px; }
.tb-sep-orb { margin: 0 5px 0 6.500px; }
.tb-caret-end { margin: 0 0 0 3.500px; border-left-width: 5px; border-right-width: 5px; border-top-width: 5px; }

/* Canvas: a free diagram, so its nodes are placed by coordinates */
.canvas {
  flex: 1; position: relative; overflow: hidden;
  background-color: #d4d0c8;
  background-image:
    repeating-linear-gradient(90deg, transparent 0 134px, #b7b4ac 134px 135px, transparent 135px 162.400px),
    repeating-linear-gradient(180deg, transparent 0 8px, #b7b4ac 8px 9px, transparent 9px 54.150px);
}
.gutter { position: absolute; left: 0; top: 0; bottom: 0; width: 134px; border-right: 1px solid #111;
  background-image:
    linear-gradient(90deg, transparent 0 84%, rgba(130,130,125,.3) 91%, rgba(95,95,90,.85) 100%),
    repeating-linear-gradient(135deg, rgba(255,255,255,.03) 0 2px, rgba(0,0,0,.015) 2px 4px); }
.group { position: absolute; background: rgba(156,116,255,.5); border: 1px solid #a293c4; }
.group-room { left: 327px; top: 254px; width: 452px; height: 113px; }
.group-shape { left: 830px; top: 220px; width: 320px; height: 181px; }
.selection { position: absolute; left: 694px; top: 260px; width: 460px; height: 503px; border: 1px dashed #6a6a6a; border-right: none; }
.heading { position: absolute; font: 28.700px/32px "Liberation Sans", sans-serif; color: #0a0a0a; white-space: nowrap; }
.h-room { left: 458px; top: 214px; }
.h-shape { left: 979px; top: 175px; }
.h-desk { left: 480px; top: 489px; }
.h-depth { left: 547px; top: 816px; }
.h-width { left: 549px; top: 919px; }

.wires { position: absolute; left: 0; top: 0; width: 1105px; height: 1138px; }
.w-outer use { fill: none; stroke: #4c4a50; stroke-width: 5; }
.w-inner use { fill: none; stroke: #b8b5ae; stroke-width: 1.200; }
.w-inner-purple use { stroke: #b6a6dc; }
.w-dash { fill: none; stroke: #555; stroke-width: 6; stroke-dasharray: 15 4; }
.w-dash-in { fill: none; stroke: #c8c5bd; stroke-width: 2; stroke-dasharray: 11 8; stroke-dashoffset: -2; }
.w-purple { fill: none; stroke: #4e4668; stroke-width: 3.500; }
.w-color { fill: none; stroke-width: 3; }
.w-a { stroke: url(#toGreen); }
.w-b { stroke: url(#fromGreen); }
.w-single path { fill: none; stroke: #575754; stroke-width: 3; }
.w-merge { fill: none; stroke: #2a2a2a; stroke-width: 2.500; }
.w-single { stroke-linecap: round; }
.ports circle { fill: #fff; stroke: #111; stroke-width: 2; }

.node { position: absolute; display: flex; align-items: center; justify-content: space-between; padding: 0 10px 0 7px; border: 1px solid #4a4a4a; border-radius: 4px; background: linear-gradient(#eeeeee, #d8d8d8 60%, #c4c4c4); font: 12px "Noto Sans", sans-serif; color: #222; }
.pins { display: flex; flex-direction: column; justify-content: space-around; height: 100%; line-height: 14px; }
.pins-right { text-align: right; width: 29px; }
.n-icon { width: 24px; height: 24px; flex: none; }
.n-rect { left: 584px; top: 265px; width: 71px; height: 92px; }
.n-icon-rect { width: 20px; height: 20px; flex: none; }
.param { justify-content: center; padding: 0; }
.p-green { left: 714px; top: 279px; width: 54px; height: 27px; padding-right: 4px; background: linear-gradient(#98e04c, #86d13f 55%, #72bc30); border-color: #333; }
.p-grey { left: 543px; top: 536px; width: 54px; height: 27px; }
.p-icon { width: 27px; height: 24px; }
.n-div1 { left: 841px; top: 297px; width: 71px; height: 47px; }
.n-cl { left: 961px; top: 231px; width: 68px; height: 30px; padding: 0 9px 0 7px; }
.n-ka { left: 1080px; top: 287px; width: 70px; height: 47px; justify-content: flex-start; gap: 8px; }
.n-icon-ka { width: 22px; height: 22px; }
.n-div2 { left: 713px; top: 599px; width: 71px; height: 48px; }
.n-list { left: 879px; top: 599px; width: 87px; height: 70px; padding: 0 11px 0 6px; }
.n-icon-list { width: 28px; height: 24px; }
.n-letter { font: bold 13px "Liberation Sans", sans-serif; fill: #333; }
.n-letter-big { font: bold 15px "Liberation Sans", sans-serif; fill: #222; }
.flag-down { position: absolute; left: 3px; top: 6px; width: 14px; height: 14px; }
.n-gct { left: 1042px; top: 536px; width: 90px; height: 70px; justify-content: flex-start; gap: 5px; padding-left: 8px; }
.n-icon-gct { width: 24px; height: 20px; flex: none; }

.slider { position: absolute; display: flex; border: 1px solid #4a4a4a; border-radius: 4px; overflow: hidden; font: 11.500px "Noto Sans", sans-serif; color: #222; background: linear-gradient(#eeeeee, #c8c8c8); }
.s-x { left: 338px; top: 294px; width: 194px; height: 23px; }
.s-y { left: 338px; top: 321px; width: 202px; height: 22px; }
.s-index { left: 587px; top: 736px; width: 190px; height: 21px; }
.slider-name { width: 44px; flex: none; display: flex; align-items: center; justify-content: center; background: linear-gradient(#aaaab8, #8c8c9e); border-right: 1px solid #4a4a4a; }
.s-index .slider-name { width: 42px; padding-right: 3px; }
.slider-track { position: relative; flex: 1; display: flex; align-items: center; gap: 4px; }
.slider-track::before { content: ""; position: absolute; left: 10px; right: 10px; top: 50%; height: 5px; margin-top: -3px; background: linear-gradient(#bbb, #bbb) left 2px / 100% 1px no-repeat, repeating-linear-gradient(90deg, #bbb 0 1px, transparent 1px 13px); }
.slider-track span, .diamond { position: relative; }
.t-grip { padding-left: 38px; }
.t-index { padding-left: 72px; }
.diamond { width: 7px; height: 7px; flex: none; transform: rotate(45deg); background: #fff; border: 1.500px solid #111; }

.yellow { position: absolute; display: flex; justify-content: center; padding: 16px 10px 0 0; border: 1px solid #555; border-radius: 3px; background: #fff95a; font: 13px "Liberation Mono", monospace; color: #222; }
.y-depth { left: 576px; top: 856px; width: 93px; height: 51px; }
.y-width { left: 574px; top: 960px; width: 94px; height: 51px; }

.mover { position: absolute; left: 666px; top: 484px; width: 36px; height: 54px; }
.dial { position: absolute; left: 1024px; top: 1054px; width: 72px; height: 76px; }
.bottom-tools { position: absolute; left: 2px; bottom: 0; width: 220px; height: 39px; display: flex; align-items: center; padding-left: 6px; gap: 12px; border-top: 1px solid #000; border-right: 1px solid #000; background: linear-gradient(90deg, transparent 0 210px, rgba(0,0,0,.22) 210px), linear-gradient(#ececec, #a8a8a8); }
.bt { width: 30px; height: 30px; flex: none; display: block; }
.bt-active { width: 34px; height: 36px; margin: 0 -2px; display: flex; align-items: center; justify-content: center; border: 1px solid #5a7ab0; border-radius: 4px; background: linear-gradient(90deg, #4d84d4, #a8c4e8); }
```
